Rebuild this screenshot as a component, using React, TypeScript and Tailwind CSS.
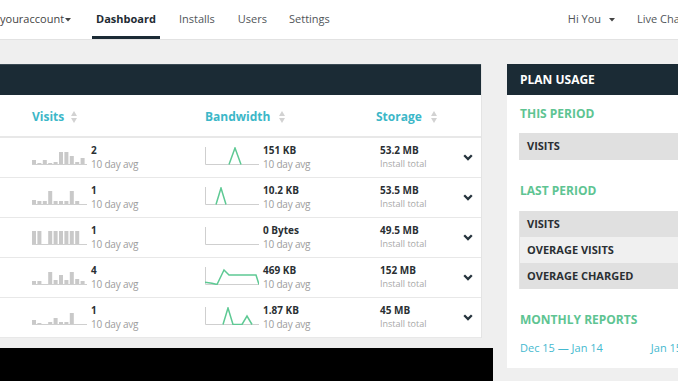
import React from "react";

function Caret() {
  return (
    <svg width="6" height="4" viewBox="0 0 6 4" className="inline-block">
      <path d="M0 0 L6 0 L3 3.5 Z" fill="#444" />
    </svg>
  );
}

function SortIcon() {
  return (
    <svg width="6" height="12" viewBox="0 0 6 12">
      <path d="M0 5 L3 0 L6 5 Z" fill="#d2d2d2" />
      <path d="M0 7 L3 12 L6 7 Z" fill="#d2d2d2" />
    </svg>
  );
}

function Bars({ h }: { h: number[] }) {
  return (
    <svg width="56" height="18" viewBox="0 0 56 18">
      {h.map((v, i) =>
        v > 0 ? (
          <rect key={i} x={i * 5.4} y={17 - v} width="4" height={v} fill="#c9c9c9" />
        ) : null
      )}
      <rect x="0" y="17" width="55" height="1" fill="#cfcfcf" />
    </svg>
  );
}

function Line({ pts }: { pts: string | null }) {
  return (
    <svg width="54" height="18" viewBox="0 0 54 18">
      <path d="M0.5 0 L0.5 17.5 L54 17.5" stroke="#cfcfcf" strokeWidth="1" fill="none" />
      {pts && (
        <polyline points={pts} stroke="#5ec994" strokeWidth="1.5" fill="none" strokeLinejoin="miter" />
      )}
    </svg>
  );
}

function Chevron() {
  return (
    <svg width="10" height="7" viewBox="0 0 10 7">
      <path d="M1.2 1.2 L5 5 L8.8 1.2" stroke="#26343d" strokeWidth="2.3" fill="none" />
    </svg>
  );
}

const rows = [
  {
    bars: [4, 1, 4, 1, 2, 12, 12, 8, 2, 6],
    visits: "2",
    line: "24,17.5 30,1 36,17.5",
    bw: "151 KB",
    st: "53.2 MB",
  },
  {
    bars: [4, 3, 3, 13, 3, 3, 3, 13, 3, 0],
    visits: "1",
    line: "11,17.5 16,1 21,17.5",
    bw: "10.2 KB",
    st: "53.5 MB",
  },
  {
    bars: [13, 13, 0, 13, 13, 13, 13, 13, 13, 0],
    visits: "1",
    line: null,
    bw: "0 Bytes",
    st: "49.5 MB",
  },
  {
    bars: [3, 3, 0, 12, 4, 9, 4, 12, 5, 3],
    visits: "4",
    line: "0,15.3 7,16.3 12,17.5 19,3 24,8 51,8 54,17.5",
    bw: "469 KB",
    st: "152 MB",
  },
  {
    bars: [4, 1, 0, 2, 6, 2, 2, 11, 0, 0],
    visits: "1",
    line: "18,17.5 23,1 28,17.5 37,17.5 42,9 47,17.5",
    bw: "1.87 KB",
    st: "45 MB",
  },
];

function Val({ v, sub, small }: { v: string; sub: string; small?: boolean }) {
  return (
    <div className="flex flex-col pt-[5px]">
      <div className="text-[10px] leading-[14px] font-bold text-[#2a2f33] whitespace-nowrap">{v}</div>
      {small ? (
        <div className="text-[9px] leading-[14px] text-[#a8a8a8] whitespace-nowrap">{sub}</div>
      ) : (
        <div className="text-[10px] leading-[14px] text-[#9c9c9c] whitespace-nowrap tracking-[-0.2px]">{sub}</div>
      )}
    </div>
  );
}

export default function App() {
  return (
    <div
      className="w-[678px] h-[381px] overflow-hidden bg-[#efefef] flex flex-col"
      style={{ fontFamily: "'Open Sans', 'Liberation Sans', sans-serif" }}
    >
      {/* Nav */}
      <div className="h-[40px] shrink-0 bg-white border-b border-[#e2e2e2] flex items-stretch text-[11px] text-[#505559] whitespace-nowrap overflow-hidden">
        <div className="flex items-center text-[#444]">
          <span>youraccount</span>
          <span className="ml-[1px] mt-[1px] flex"><Caret /></span>
        </div>
        <div className="ml-[21px] px-[4px] flex items-center border-b-[3px] border-[#1b2b35] pt-[3px] font-bold text-[#1e2b33]">
          Dashboard
        </div>
        <div className="ml-[19px] flex items-center">Installs</div>
        <div className="ml-[23px] flex items-center">Users</div>
        <div className="ml-[22px] flex items-center">Settings</div>
        <div className="ml-[238px] flex items-center">
          <span>Hi You</span>
          <span className="ml-[8px] mt-[1px] flex"><Caret /></span>
        </div>
        <div className="ml-[22px] flex items-center">Live Chat</div>
      </div>

      {/* Content */}
      <div className="flex pt-[24px] items-start">
        {/* Left column */}
        <div className="w-[493px] shrink-0 flex flex-col">
          <div className="w-[482px] bg-white border-r border-[#e4e4e4]">
            <div className="h-[31px] bg-[#1b2b35] border-t border-[#3a4a54]" />
            <div className="h-[43px] border-b-2 border-[#e8e8e8] flex items-center pl-[32px] pt-[2px] text-[12px] font-bold text-[#3cb7c8]">
              <div className="w-[173px] flex items-center gap-[7px]">
                <span>Visits</span>
                <SortIcon />
              </div>
              <div className="w-[171px] flex items-center gap-[9px]">
                <span>Bandwidth</span>
                <SortIcon />
              </div>
              <div className="flex items-center gap-[9px]">
                <span>Storage</span>
                <SortIcon />
              </div>
            </div>
            {rows.map((r, i) => (
              <div key={i} className="h-[40px] border-b border-[#e8e8e8] flex items-start pl-[32px]">
                <div className="w-[173px] flex items-start">
                  <div className="mt-[9px] w-[56px] flex">
                    <Bars h={r.bars} />
                  </div>
                  <div className="ml-[3px]">
                    <Val v={r.visits} sub="10 day avg" />
                  </div>
                </div>
                <div className="w-[171px] flex items-start">
                  <div className="mt-[9px] w-[54px] flex">
                    <Line pts={r.line} />
                  </div>
                  <div className="ml-[4px]">
                    <Val v={r.bw} sub="10 day avg" />
                  </div>
                </div>
                <div className="w-[87px] pl-[4px]">
                  <Val v={r.st} sub="Install total" small />
                </div>
                <div className="mt-[16px] flex">
                  <Chevron />
                </div>
              </div>
            ))}
          </div>
          <div className="h-[10px]" />
          <div className="w-[493px] h-[40px] bg-black" />
        </div>

        {/* Right panel */}
        <div className="ml-[14px] w-[220px] shrink-0 bg-white">
          <div className="h-[31px] bg-[#1b2b35] flex items-center pl-[13px] text-[12px] font-bold text-white">
            PLAN USAGE
          </div>
          <div className="pl-[12px] pt-[11px] pb-[12px] flex flex-col">
            <div className="pl-[1px] text-[12px] leading-[16px] font-bold text-[#5ec492]">THIS PERIOD</div>
            <div className="mt-[11px] h-[27px] bg-[#e0e0e0] flex items-center pl-[8px] text-[11px] font-bold text-[#2a2f33]">
              VISITS
            </div>
            <div className="mt-[23px] pl-[1px] text-[12px] leading-[16px] font-bold text-[#5ec492]">LAST PERIOD</div>
            <div className="mt-[12px] flex flex-col border-l border-[#e4e4e4] text-[11px] font-bold text-[#2a2f33]">
              <div className="h-[26px] bg-[#e0e0e0] flex items-center pl-[7px]">VISITS</div>
              <div className="h-[26px] bg-[#f0f0f0] flex items-center pl-[7px]">OVERAGE VISITS</div>
              <div className="h-[26px] bg-[#e0e0e0] flex items-center pl-[7px]">OVERAGE CHARGED</div>
            </div>
            <div className="mt-[23px] pl-[1px] text-[12px] leading-[16px] font-bold text-[#5ec492] whitespace-nowrap">MONTHLY REPORTS</div>
            <div className="mt-[12px] pl-[1px] flex gap-[48px] text-[11px] leading-[16px] text-[#45b9cf] whitespace-nowrap">
              <span>Dec 15 — Jan 14</span>
              <span>Jan 15 — Feb 14</span>
            </div>
          </div>
        </div>
      </div>
    </div>
  );
}
